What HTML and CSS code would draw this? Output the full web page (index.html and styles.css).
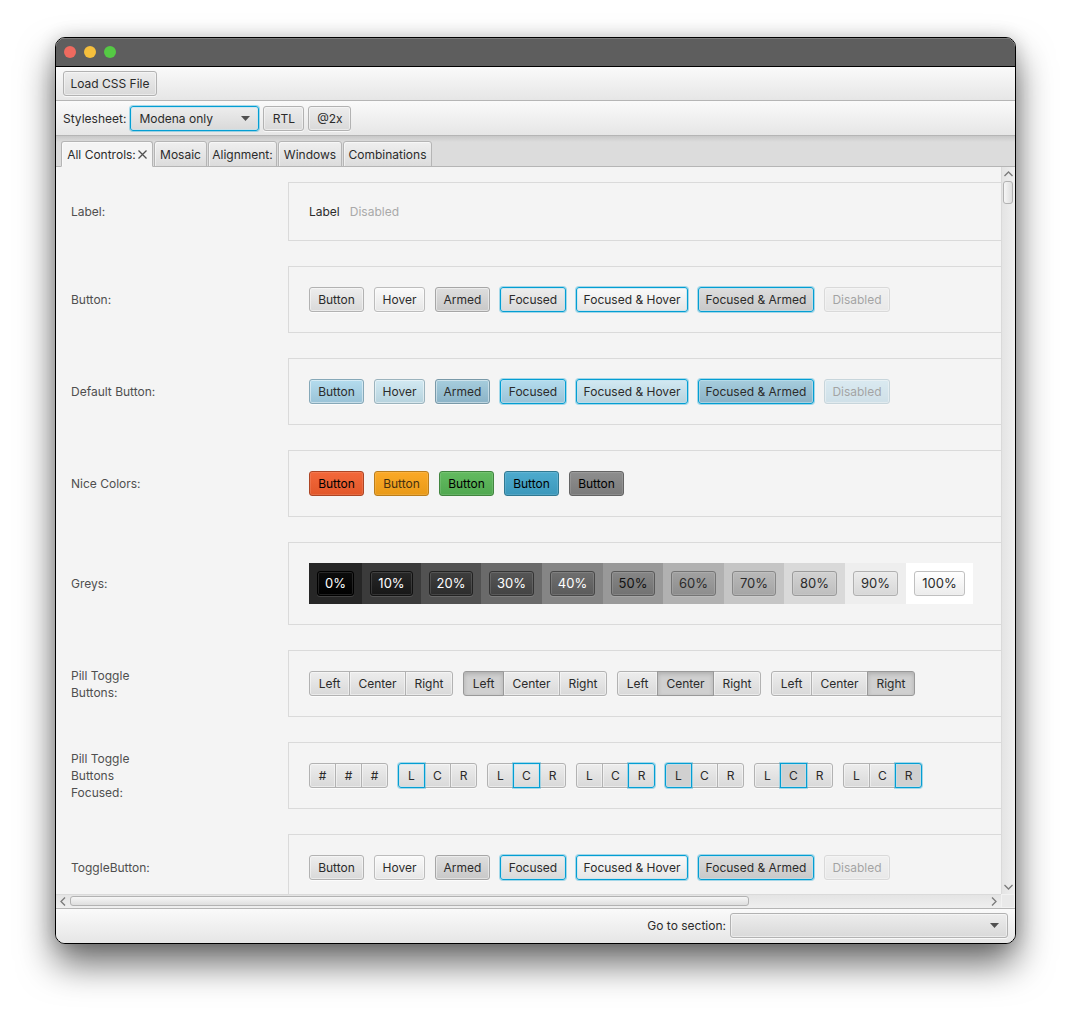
FILE: index.html
```html
<!DOCTYPE html>
<html lang="en">
<head>
<meta charset="utf-8">
<title>Modena</title>
<meta name="viewport" content="width=device-width, initial-scale=1">
<link rel="stylesheet" href="styles.css">
</head>
<body>
<div class="window">
  <header class="titlebar">
    <button class="light close" aria-label="Close"></button>
    <button class="light minimize" aria-label="Minimize"></button>
    <button class="light maximize" aria-label="Zoom"></button>
  </header>
  <div class="toolbar">
    <button class="btn w-file">Load CSS File</button>
  </div>
  <div class="toolbar second">
    <label for="stylesheet">Stylesheet:</label>
    <div class="combo combo-style">
      <select id="stylesheet" class="btn focused"><option>Modena only</option></select>
      <svg class="caret" viewBox="0 0 9 5" aria-hidden="true"><path d="M0 0H9L4.500 5Z"/></svg>
    </div>
    <button class="btn w-tool">RTL</button>
    <button class="btn w-tool2">@2x</button>
  </div>
  <nav class="tabs" role="tablist">
    <button class="tab active" role="tab" aria-selected="true">All Controls:<svg class="x" viewBox="0 0 9 9" aria-hidden="true"><path d="M0.500 0.500L8.500 8.500M8.500 0.500L0.500 8.500"/></svg></button>
    <button class="tab t-mosaic" role="tab">Mosaic</button>
    <button class="tab t-align" role="tab">Alignment:</button>
    <button class="tab t-windows" role="tab">Windows</button>
    <button class="tab t-comb" role="tab">Combinations</button>
  </nav>
  <main class="scrollpane">
    <div class="viewport">
      <section class="row">
        <h2>Label:</h2>
        <div class="samples"><span class="lab">Label</span><span class="lab off">Disabled</span></div>
      </section>
      <section class="row">
        <h2>Button:</h2>
        <div class="samples">
          <button class="btn w-button">Button</button>
          <button class="btn w-hover hover">Hover</button>
          <button class="btn w-button armed">Armed</button>
          <button class="btn w-focused focused">Focused</button>
          <button class="btn w-fhover hover focused">Focused &amp; Hover</button>
          <button class="btn w-farmed armed focused">Focused &amp; Armed</button>
          <button class="btn w-focused" disabled>Disabled</button>
        </div>
      </section>
      <section class="row">
        <h2>Default Button:</h2>
        <div class="samples blue">
          <button class="btn w-button">Button</button>
          <button class="btn w-hover hover">Hover</button>
          <button class="btn w-button armed">Armed</button>
          <button class="btn w-focused focused">Focused</button>
          <button class="btn w-fhover hover focused">Focused &amp; Hover</button>
          <button class="btn w-farmed armed focused">Focused &amp; Armed</button>
          <button class="btn w-focused" disabled>Disabled</button>
        </div>
      </section>
      <section class="row">
        <h2>Nice Colors:</h2>
        <div class="samples">
          <button class="btn w-button c-red">Button</button>
          <button class="btn w-button c-orange">Button</button>
          <button class="btn w-button c-green">Button</button>
          <button class="btn w-button c-cyan">Button</button>
          <button class="btn w-button c-grey">Button</button>
        </div>
      </section>
      <section class="row">
        <h2>Greys:</h2>
        <div class="samples greys">
          <div class="cell g0"><button class="btn">0%</button></div>
          <div class="cell g10"><button class="btn">10%</button></div>
          <div class="cell g20"><button class="btn">20%</button></div>
          <div class="cell g30"><button class="btn">30%</button></div>
          <div class="cell g40"><button class="btn">40%</button></div>
          <div class="cell g50"><button class="btn">50%</button></div>
          <div class="cell g60"><button class="btn">60%</button></div>
          <div class="cell g70"><button class="btn">70%</button></div>
          <div class="cell g80"><button class="btn">80%</button></div>
          <div class="cell g90"><button class="btn">90%</button></div>
          <div class="cell g100"><button class="btn">100%</button></div>
        </div>
      </section>
      <section class="row">
        <h2>Pill Toggle Buttons:</h2>
        <div class="samples">
          <div class="pill"><button class="btn">Left</button><button class="btn">Center</button><button class="btn">Right</button></div>
          <div class="pill"><button class="btn on">Left</button><button class="btn">Center</button><button class="btn">Right</button></div>
          <div class="pill"><button class="btn">Left</button><button class="btn on">Center</button><button class="btn">Right</button></div>
          <div class="pill"><button class="btn">Left</button><button class="btn">Center</button><button class="btn on">Right</button></div>
        </div>
      </section>
      <section class="row">
        <h2>Pill Toggle Buttons Focused:</h2>
        <div class="samples">
          <div class="pill mini"><button class="btn">#</button><button class="btn">#</button><button class="btn">#</button></div>
          <div class="pill mini"><button class="btn focused">L</button><button class="btn">C</button><button class="btn">R</button></div>
          <div class="pill mini"><button class="btn">L</button><button class="btn focused">C</button><button class="btn">R</button></div>
          <div class="pill mini"><button class="btn">L</button><button class="btn">C</button><button class="btn focused">R</button></div>
          <div class="pill mini"><button class="btn on focused">L</button><button class="btn">C</button><button class="btn">R</button></div>
          <div class="pill mini"><button class="btn">L</button><button class="btn on focused">C</button><button class="btn">R</button></div>
          <div class="pill mini"><button class="btn">L</button><button class="btn">C</button><button class="btn on focused">R</button></div>
        </div>
      </section>
      <section class="row">
        <h2>ToggleButton:</h2>
        <div class="samples">
          <button class="btn w-button">Button</button>
          <button class="btn w-hover hover">Hover</button>
          <button class="btn w-button armed">Armed</button>
          <button class="btn w-focused focused">Focused</button>
          <button class="btn w-fhover hover focused">Focused &amp; Hover</button>
          <button class="btn w-farmed armed focused">Focused &amp; Armed</button>
          <button class="btn w-focused" disabled>Disabled</button>
        </div>
      </section>
    </div>
    <div class="vbar">
      <svg class="arrow-v" viewBox="0 0 9 6" aria-hidden="true"><path d="M0.500 5L4.500 1L8.500 5"/></svg>
      <div class="track"><div class="thumb"></div></div>
      <svg class="arrow-v" viewBox="0 0 9 6" aria-hidden="true"><path d="M0.500 1L4.500 5L8.500 1"/></svg>
    </div>
    <div class="hbar">
      <svg class="arrow-h" viewBox="0 0 6 9" aria-hidden="true"><path d="M5 0.500L1 4.500L5 8.500"/></svg>
      <div class="track"><div class="thumb"></div></div>
      <svg class="arrow-h" viewBox="0 0 6 9" aria-hidden="true"><path d="M1 0.500L5 4.500L1 8.500"/></svg>
    </div>
    <div class="corner"></div>
  </main>
  <footer class="toolbar bottom">
    <label for="section">Go to section:</label>
    <div class="combo combo-section">
      <select id="section" class="btn"><option></option></select>
      <svg class="caret" viewBox="0 0 9 5" aria-hidden="true"><path d="M0 0H9L4.500 5Z"/></svg>
    </div>
  </footer>
</div>
</body>
</html>
```
FILE: styles.css
```css
* { box-sizing: border-box; }

body {
  margin: 0;
  height: 100vh;
  padding: 37px 55px 73px;
  background: #fff;
  color: #2b2b2b;
  font: 12px/17px Inter, "Liberation Sans", sans-serif;
  overflow: hidden;
}

.window {
  display: flex;
  flex-direction: column;
  height: 100%;
  border: 1px solid #000;
  border-radius: 10px;
  background: #f4f4f4;
  overflow: hidden;
  box-shadow: 0 20px 36px rgba(0, 0, 0, .58), 0 0 18px rgba(0, 0, 0, .16);
}

/* Title bar */
.titlebar {
  display: flex;
  align-items: center;
  gap: 8px;
  height: 29px;
  padding: 0 8px;
  background: #5e5e5e;
  border-bottom: 1px solid #000;
  box-shadow: inset 0 1px #7c7c7c;
  flex: none;
}
.light { width: 12px; height: 12px; padding: 0; border: 0; border-radius: 50%; }
.close { background: #ee6a5f; }
.minimize { background: #f5bf3c; }
.maximize { background: #55c944; }

/* Tool bars */
.toolbar {
  display: flex;
  align-items: center;
  gap: 4px;
  height: 34px;
  flex: none;
  padding: 0 7px;
  background: linear-gradient(#fafafa, #e6e6e6);
  border-bottom: 1px solid #b5b5b5;
}
.toolbar.second { height: 35px; }
.toolbar.bottom {
  height: 35px;
  justify-content: flex-end;
  padding-bottom: 1px;
  border-top: 1px solid #b5b5b5;
  border-bottom: 0;
}

/* Buttons */
.btn {
  height: 25px;
  flex: none;
  padding: 0;
  font: inherit;
  line-height: 17px;
  color: #2b2b2b;
  white-space: nowrap;
  text-align: center;
  border: 1px solid #b2b2b2;
  border-radius: 3px;
  background: linear-gradient(#ededed, #d9d9d9);
  box-shadow: inset 0 0 0 1px rgba(255, 255, 255, .45), 0 1px rgba(255, 255, 255, .7);
}
.btn.hover { background: linear-gradient(#fafafa, #e6e6e6); border-color: #bcbcbc; }
.btn.armed { background: linear-gradient(#dedede, #c8c8c8); border-color: #a6a6a6; }
.btn.on {
  background: #d0d0d0;
  border-color: #999;
  box-shadow: inset 0 2px 4px rgba(0, 0, 0, .16);
}
.btn.focused {
  border-color: #039ed3;
  box-shadow: inset 0 0 0 1px rgba(190, 226, 240, .6), 0 0 0 1px #039ed355;
}
.btn:disabled { opacity: .4; }

.blue .btn { background: linear-gradient(#b4dcee, #9ac3d7); border-color: #86a8b8; }
.blue .btn.hover { background: linear-gradient(#d2e9f2, #b7d3de); border-color: #9bb3bd; }
.blue .btn.armed { background: linear-gradient(#a6cddd, #8bb3c7); border-color: #7999a8; }
.blue .btn.focused { border-color: #039ed3; }

.c-red, .c-orange, .c-green, .c-cyan, .c-grey {
  color: #000;
  box-shadow: inset 0 0 0 1px rgba(255, 255, 255, .12);
}
.c-red { background: linear-gradient(#f3683a, #e2572a); border-color: #ad4524; }
.c-orange { background: linear-gradient(#fba927, #e99a18); border-color: #bb7d1a; color: #453010; }
.c-green { background: linear-gradient(#63bb60, #50a850); border-color: #41853f; }
.c-cyan { background: linear-gradient(#4eabce, #3c98bb); border-color: #307891; }
.c-grey { background: linear-gradient(#8e8e8e, #7b7b7b); border-color: #646464; }

.w-button { width: 55px; }
.w-hover { width: 51px; }
.w-focused { width: 66px; }
.w-fhover { width: 112px; }
.w-farmed { width: 116px; }
.w-file { width: 94px; }
.w-tool { width: 41px; }
.w-tool2 { width: 43px; }

/* Combo boxes */
.combo { position: relative; display: flex; }
.combo select { appearance: none; width: 100%; padding: 0 24px 0 8px; text-align: left; outline: 0; }
.combo-style { width: 129px; }
.combo-section { width: 278px; }
.caret {
  position: absolute;
  right: 9px;
  top: 10px;
  width: 9px;
  height: 5px;
  fill: #505050;
  pointer-events: none;
}

/* Tabs */
.tabs {
  display: flex;
  gap: 1px;
  flex: none;
  height: 31px;
  padding: 5px 5px 0;
  background: linear-gradient(#c8c8c8, #dcdcdc 6px);
  box-shadow: inset 0 -1px #b5b5b5;
}
.tab {
  display: flex;
  align-items: center;
  justify-content: center;
  gap: 2px;
  padding: 0;
  font: inherit;
  color: #2b2b2b;
  white-space: nowrap;
  border: 1px solid #b5b5b5;
  border-radius: 3px 3px 0 0;
  background: linear-gradient(#efefef, #dcdcdc);
  box-shadow: inset 1px 1px rgba(255, 255, 255, .5);
}
.tab.active { width: 92px; background: #f4f4f4; border-bottom-color: #f4f4f4; }
.t-mosaic { width: 53px; }
.t-align { width: 69px; }
.t-windows { width: 64px; }
.t-comb { width: 89px; }
.x { width: 9px; height: 9px; fill: none; stroke: #505050; stroke-width: 1.3; }

/* Scroll pane */
.scrollpane {
  flex: 1;
  min-height: 0;
  display: grid;
  grid-template: minmax(0, 1fr) 14px / minmax(0, 1fr) 14px;
}
.viewport { overflow: hidden; padding: 15px 0 0 15px; }
.row {
  display: grid;
  grid-template-columns: 217px minmax(0, 1fr);
  align-items: center;
  margin-bottom: 25px;
}
.row h2 { margin: 0; width: 90px; font: inherit; color: #4f4f4f; }
.samples {
  display: flex;
  gap: 10px;
  padding: 20px;
  border: 1px solid #dadada;
  border-right: 0;
}
.lab.off { color: #a9a9a9; }

/* Grey swatches */
.greys { gap: 0; font-size: 13px; }
.cell { padding: 8px; }
.cell .btn { width: 45px; box-shadow: inset 0 0 0 1px rgba(255, 255, 255, .12), 0 1px rgba(255, 255, 255, .12); }
.g0 { background: #262626; }
.g10 { background: #3b3b3b; }
.g20 { background: #525252; }
.g30 { background: #6a6a6a; }
.g40 { background: #858585; }
.g50 { background: #999; }
.g60 { background: #b1b1b1; }
.g70 { background: #c5c5c5; }
.g80 { background: #d9d9d9; }
.g90 { background: #eee; }
.g100 { background: #fff; }
.g0 .btn { width: 37px; color: #fff; background: linear-gradient(#0c0c0c, #000); border-color: #000; }
.g10 .btn { width: 43px; color: #fff; background: linear-gradient(#272727, #171717); border-color: #111; }
.g20 .btn { width: 44px; color: #fff; background: linear-gradient(#3e3e3e, #2c2c2c); border-color: #222; }
.g30 .btn { color: #fff; background: linear-gradient(#565656, #434343); border-color: #343434; }
.g40 .btn { color: #fff; background: linear-gradient(#6f6f6f, #5b5b5b); border-color: #474747; }
.g50 .btn { width: 44px; color: #111; background: linear-gradient(#868686, #727272); border-color: #595959; }
.g60 .btn { background: linear-gradient(#a1a1a1, #8d8d8d); border-color: #747474; }
.g70 .btn { width: 44px; background: linear-gradient(#b9b9b9, #a5a5a5); border-color: #888; }
.g80 .btn { background: linear-gradient(#d2d2d2, #bebebe); border-color: #9b9b9b; }
.g90 .btn { background: linear-gradient(#ebebeb, #d7d7d7); border-color: #b0b0b0; }
.g100 .btn { width: 51px; background: linear-gradient(#fff, #ececec); border-color: #c0c0c0; }

/* Pills */
.pill { display: flex; }
.pill .btn { width: 41px; border-radius: 0; }
.pill .btn + .btn { margin-left: -1px; }
.pill .btn:nth-child(2) { width: 57px; }
.pill .btn:first-child { border-radius: 3px 0 0 3px; }
.pill .btn:last-child { width: 48px; border-radius: 0 3px 3px 0; }
.pill.mini .btn { width: 27px; }
.pill .on, .pill .focused { position: relative; }

/* Scroll bars */
.vbar, .hbar { display: flex; align-items: center; background: linear-gradient(90deg, #e4e4e4, #efefef); }
.vbar { flex-direction: column; border-left: 1px solid #dadada; padding: 4px 1px 4px 0; gap: 4px; }
.hbar { border-top: 1px solid #dadada; padding: 0 4px 1px; gap: 4px; background: linear-gradient(#e4e4e4, #efefef); }
.corner { background: #e9e9e9; border: 1px solid #f2f2f2; }
.track { flex: 1; }
.thumb {
  border: 1px solid #b2b2b2;
  border-radius: 3px;
  background: linear-gradient(90deg, #f6f6f6, #dedede);
}
.vbar .thumb { width: 10px; height: 23px; }
.hbar .thumb { width: 74%; height: 10px; background: linear-gradient(#f6f6f6, #dedede); }
.arrow-v, .arrow-h { fill: none; stroke: #7a7a7a; stroke-width: 1.3; flex: none; }
.arrow-v { width: 9px; height: 6px; }
.arrow-h { width: 6px; height: 9px; }
```
